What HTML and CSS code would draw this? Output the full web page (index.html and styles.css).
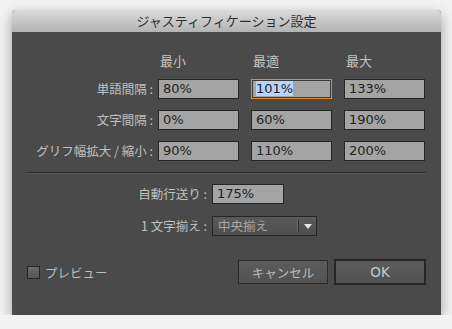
FILE: index.html
```html
<!DOCTYPE html>
<html lang="ja">
<head>
    <meta charset="UTF-8">
    <meta name="viewport" content="width=device-width, initial-scale=1.0">
    <title>ジャスティフィケーション設定</title>
    <link rel="stylesheet" href="styles.css">
</head>
<body>
    <div class="dialog">
        <div class="titlebar">ジャスティフィケーション設定</div>
        <div class="content">
            <div class="grid">
                <div></div>
                <div class="head">最小</div>
                <div class="head">最適</div>
                <div class="head">最大</div>

                <div class="label">単語間隔 :</div>
                <div class="field">80%</div>
                <div class="field focus"><span class="sel">101%</span></div>
                <div class="field">133%</div>

                <div class="label">文字間隔 :</div>
                <div class="field">0%</div>
                <div class="field">60%</div>
                <div class="field">190%</div>

                <div class="label">グリフ幅拡大 / 縮小 :</div>
                <div class="field">90%</div>
                <div class="field">110%</div>
                <div class="field">200%</div>
            </div>

            <div class="sep"></div>

            <div class="rows">
                <div class="row">
                    <div class="label wide">自動行送り :</div>
                    <div class="field short">175%</div>
                </div>
                <div class="row">
                    <div class="label wide">1&nbsp;文字揃え :</div>
                    <div class="select">
                        <span class="value">中央揃え</span>
                        <span class="arrow"></span>
                    </div>
                </div>
            </div>

            <div class="footer">
                <label class="check"><span class="box"></span>プレビュー</label>
                <div class="buttons">
                    <button class="btn">キャンセル</button>
                    <button class="btn ok">OK</button>
                </div>
            </div>
        </div>
    </div>
</body>
</html>
```

FILE: styles.css
```css
body {
    margin: 0;
    padding: 10px 0 0 12px;
    background: #f2f2f2;
    font-family: "Noto Sans CJK JP", "DejaVu Sans", sans-serif;
}

.dialog {
    width: 429px;
    border-radius: 4px 4px 0 0;
    box-shadow: 0 5px 14px rgba(0, 0, 0, 0.35);
    background: #4a4a4a;
}

.titlebar {
    height: 22px;
    line-height: 22px;
    text-align: center;
    font-size: 13px;
    color: #2e2e2e;
    border-radius: 4px 4px 0 0;
    background: linear-gradient(#dadada, #b4b4b4);
}

.content {
    padding: 22px 15px 30px 15px;
}

.grid {
    display: grid;
    grid-template-columns: 119px 81px 81px 81px;
    grid-template-rows: 14px 20px 20px 20px;
    column-gap: 12px;
    row-gap: 11px;
}

.grid .label {
    margin-right: -7px;
}

.head {
    font-size: 13px;
    line-height: 14px;
    color: #c4c4c4;
    padding-left: 2px;
}

.label {
    font-size: 12.5px;
    line-height: 20px;
    color: #c0c0c0;
    text-align: right;
    white-space: nowrap;
}

.field {
    box-sizing: border-box;
    height: 20px;
    border: 1px solid #262626;
    background: #a4a4a4;
    font-family: "DejaVu Sans", sans-serif;
    font-size: 13px;
    line-height: 18px;
    color: #1e1e1e;
    padding-left: 4px;
}

.field.focus {
    border: 1px solid #e88a1c;
    box-shadow: inset 0 0 0 1px #3a3a3a;
}

.sel {
    background: #b5d5fd;
}

.sep {
    margin-top: 11px;
    height: 1px;
    background: #303030;
    border-bottom: 1px solid #555555;
}

.rows {
    margin-top: 10px;
    display: flex;
    flex-direction: column;
    gap: 12px;
}

.row {
    display: flex;
    align-items: center;
    gap: 5px;
}

.label.wide {
    width: 180px;
}

.field.short {
    width: 72px;
}

.select {
    box-sizing: border-box;
    width: 105px;
    height: 20px;
    border: 1px solid #262626;
    background: linear-gradient(#5a5a5a, #4e4e4e);
    display: flex;
    align-items: center;
}

.select .value {
    flex: 1;
    padding-left: 5px;
    font-size: 12.5px;
    color: #a8a8a8;
    line-height: 18px;
}

.select .arrow {
    width: 17px;
    height: 12px;
    border-left: 1px solid #2c2c2c;
    box-shadow: -1px 0 0 #6a6a6a;
    position: relative;
}

.select .arrow::after {
    content: "";
    position: absolute;
    left: 5px;
    top: 4px;
    border-left: 4px solid transparent;
    border-right: 4px solid transparent;
    border-top: 5px solid #e6e6e6;
}

.footer {
    margin-top: 23px;
    display: flex;
    align-items: center;
    justify-content: space-between;
}

.check {
    display: flex;
    align-items: center;
    gap: 5px;
    font-size: 12.5px;
    color: #bdbdbd;
}

.box {
    box-sizing: border-box;
    width: 13px;
    height: 13px;
    border: 1px solid #252525;
    background: linear-gradient(#6a6a6a, #555555);
}

.buttons {
    display: flex;
    align-items: center;
    gap: 6px;
}

.btn {
    box-sizing: border-box;
    width: 90px;
    height: 24px;
    border: 1px solid #2a2a2a;
    background: linear-gradient(#5c5c5c, #525252);
    color: #bcbcbc;
    font-family: "Noto Sans CJK JP", sans-serif;
    font-size: 12.5px;
    padding: 0;
}

.btn.ok {
    width: 92px;
    height: 26px;
    border: 2px solid #262626;
    font-family: "DejaVu Sans", sans-serif;
    font-size: 13.5px;
    color: #c8c8c8;
}
```
